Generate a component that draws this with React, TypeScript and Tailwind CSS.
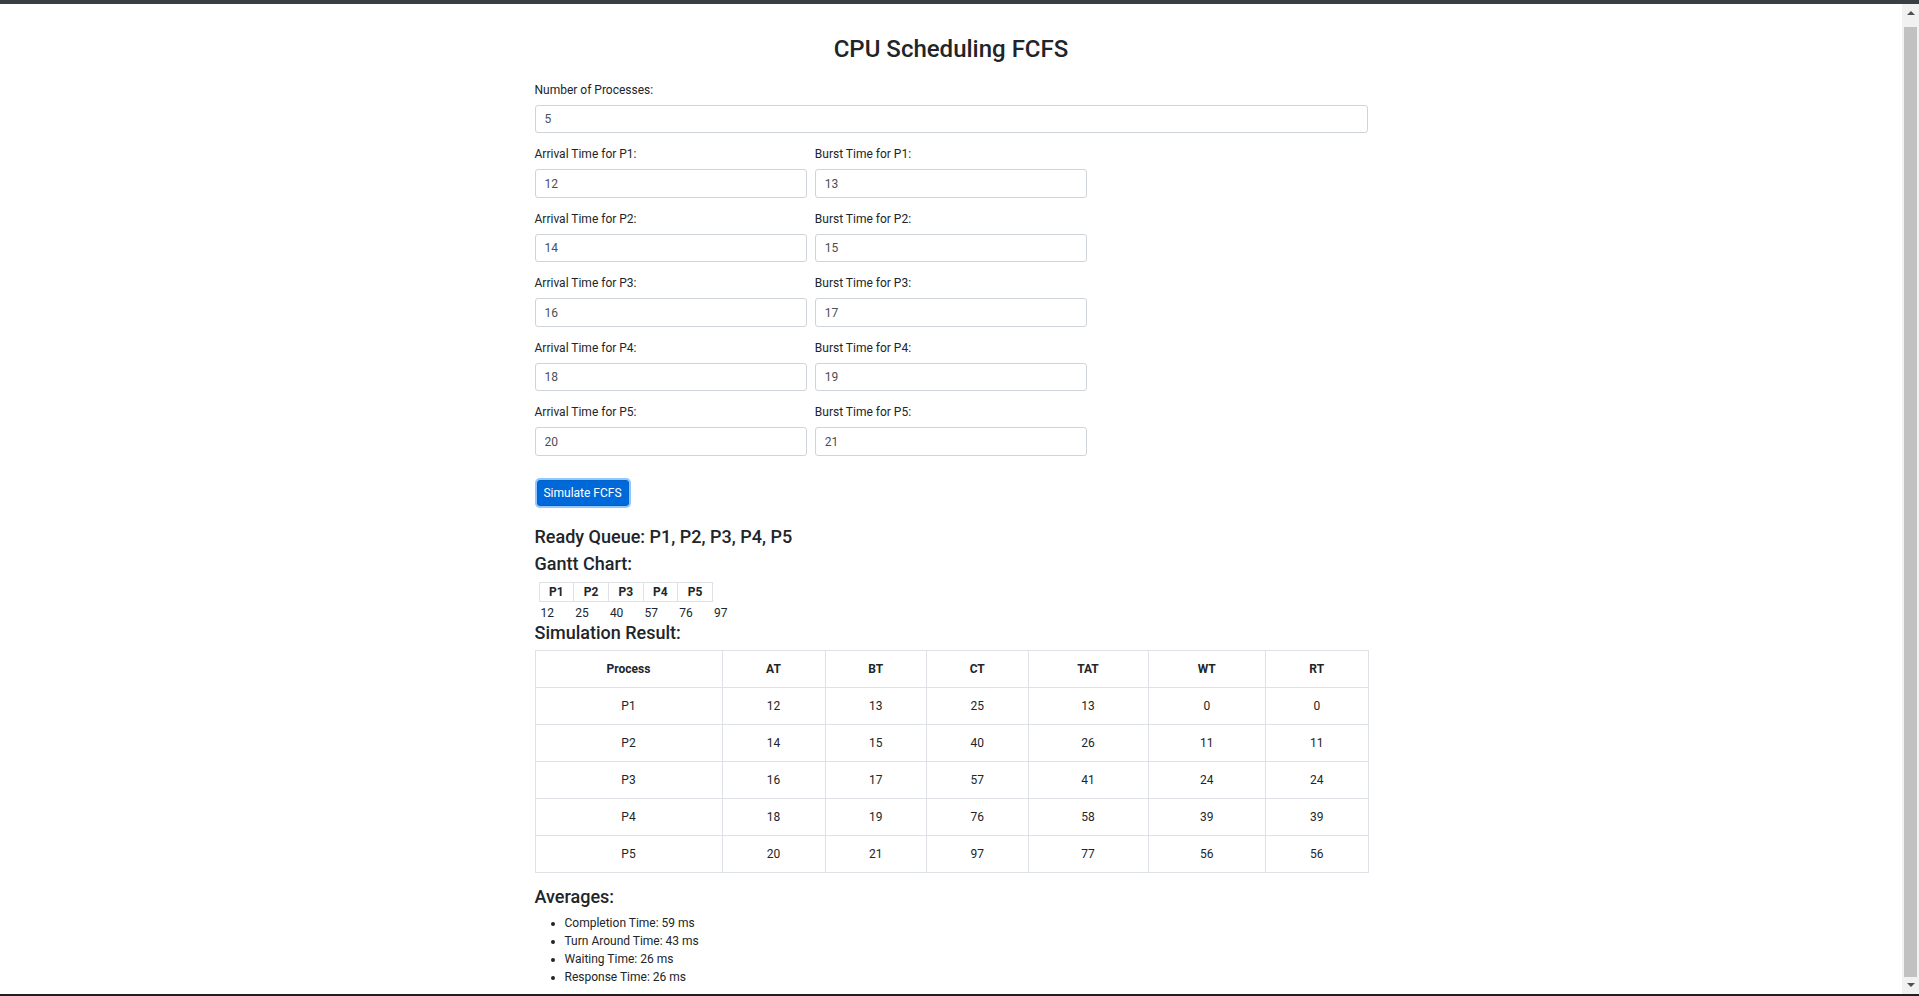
import React from "react";

const procs = [
  { p: "P1", at: 12, bt: 13, ct: 25, tat: 13, wt: 0, rt: 0 },
  { p: "P2", at: 14, bt: 15, ct: 40, tat: 26, wt: 11, rt: 11 },
  { p: "P3", at: 16, bt: 17, ct: 57, tat: 41, wt: 24, rt: 24 },
  { p: "P4", at: 18, bt: 19, ct: 76, tat: 58, wt: 39, rt: 39 },
  { p: "P5", at: 20, bt: 21, ct: 97, tat: 77, wt: 56, rt: 56 },
];

const times = [12, 25, 40, 57, 76, 97];

function Field({ label, value }: { label: string; value: string }) {
  return (
    <div className="mb-[12px]">
      <label className="block text-[12px] leading-[18px] mb-[6px] text-[#212529]">{label}</label>
      <input
        type="text"
        defaultValue={value}
        className="block w-full h-[28.5px] px-[9px] text-[12px] leading-[18px] text-[#495057] bg-white border border-[#ced4da] rounded-[3px] outline-none"
      />
    </div>
  );
}

export default function App() {
  return (
    <div className="h-[996px] w-full overflow-hidden flex flex-col bg-white font-['Roboto',sans-serif] text-[#212529]">
      <div className="h-[4px] w-full bg-[#373f43] shrink-0" />
      <div className="flex-1 min-h-0 flex">
        <div className="flex-1 min-w-0 overflow-hidden">
          <div className="w-[833px] mx-auto pt-[31px]">
            <h2 className="text-[24px] leading-[28.8px] font-medium text-center mb-[17px]">CPU Scheduling FCFS</h2>
            <Field label="Number of Processes:" value="5" />
            {procs.map((r) => (
              <div key={r.p} className="grid grid-cols-3 gap-x-[8px]">
                <Field label={`Arrival Time for ${r.p}:`} value={String(r.at)} />
                <Field label={`Burst Time for ${r.p}:`} value={String(r.bt)} />
              </div>
            ))}
            <button className="mt-[12.5px] ml-[2px] w-[92px] h-[25.5px] flex items-center justify-center text-[12px] leading-[18px] text-white bg-[#0069d9] border border-[#0062cc] rounded-[3px] ring-2 ring-[#92c7ff]">
              Simulate FCFS
            </button>
            <h4 className="mt-[20px] text-[18px] leading-[21.6px] font-medium mb-[6px]">Ready Queue: P1, P2, P3, P4, P5</h4>
            <h4 className="text-[18px] leading-[21.6px] font-medium mb-[6px]">Gantt Chart:</h4>
            <div className="pl-[4px] pt-[1px]">
              <div className="flex w-max border-l border-[#dee2e6]">
                {procs.map((r) => (
                  <div
                    key={r.p}
                    className="w-[34.7px] h-[20px] border-y border-r border-[#dee2e6] flex items-center justify-center text-[12px] font-bold"
                  >
                    {r.p}
                  </div>
                ))}
              </div>
            </div>
            <div className="flex pl-[6px] mt-[2px] text-[12px] leading-[18px]">
              {times.map((t) => (
                <span key={t} className="w-[34.7px]">{t}</span>
              ))}
            </div>
            <h4 className="text-[18px] leading-[21.6px] font-medium mb-[6px]">Simulation Result:</h4>
            <table className="w-full border-collapse border border-[#dee2e6] text-[12px] leading-[18px] mb-[13px] table-fixed">
              <colgroup>
                <col className="w-[187px]" />
                <col className="w-[103px]" />
                <col className="w-[101.5px]" />
                <col className="w-[101.5px]" />
                <col className="w-[120px]" />
                <col className="w-[117.5px]" />
                <col className="w-[102.5px]" />
              </colgroup>
              <thead>
                <tr>
                  {["Process", "AT", "BT", "CT", "TAT", "WT", "RT"].map((h) => (
                    <th key={h} className="border border-[#dee2e6] py-[9px] px-[9px] text-center font-bold">
                      {h}
                    </th>
                  ))}
                </tr>
              </thead>
              <tbody>
                {procs.map((r) => (
                  <tr key={r.p}>
                    {[r.p, r.at, r.bt, r.ct, r.tat, r.wt, r.rt].map((v, i) => (
                      <td key={i} className="border border-[#dee2e6] py-[9px] px-[9px] text-center">
                        {v}
                      </td>
                    ))}
                  </tr>
                ))}
              </tbody>
            </table>
            <h4 className="text-[18px] leading-[21.6px] font-medium mb-[7px]">Averages:</h4>
            <ul className="list-disc pl-[30px] text-[12px] leading-[18px]">
              <li>Completion Time: 59 ms</li>
              <li>Turn Around Time: 43 ms</li>
              <li>Waiting Time: 26 ms</li>
              <li>Response Time: 26 ms</li>
            </ul>
          </div>
        </div>
        <div className="w-[17px] shrink-0 bg-[#f1f1f1] flex flex-col">
          <div className="h-[17px] flex items-center justify-center">
            <svg width="8" height="5" viewBox="0 0 8 5">
              <path d="M0 5 L4 1 L8 5 Z" fill="#505050" />
            </svg>
          </div>
          <div className="h-[6px]" />
          <div className="flex-1 mx-[2px] bg-[#c1c1c1]" />
          <div className="h-[17px] flex items-center justify-center">
            <svg width="8" height="5" viewBox="0 0 8 5">
              <path d="M0 0 L8 0 L4 4 Z" fill="#505050" />
            </svg>
          </div>
        </div>
      </div>
      <div className="h-[2px] w-full bg-[#202020] shrink-0" />
    </div>
  );
}
